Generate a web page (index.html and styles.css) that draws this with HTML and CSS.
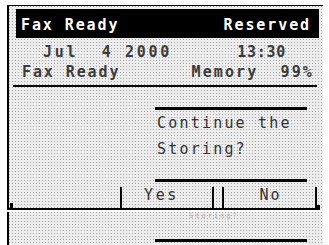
FILE: index.html
```html
<!DOCTYPE html>
<html>
<head>
<meta charset="utf-8">
<link rel="stylesheet" href="styles.css">
</head>
<body>
<div class="panel panel-main">
  <div class="title-bar">
    <span class="t-left">Fax Ready</span>
    <span class="t-right">Reserved</span>
  </div>
  <div class="row row-date">
    <span class="date">Jul  4 2000</span>
    <span class="time">13:30</span>
  </div>
  <div class="row row-status">
    <span class="status">Fax Ready</span>
    <span class="memory">Memory  99%</span>
  </div>
  <div class="rule"></div>
  <div class="dialog">
    <div class="thick"></div>
    <div class="message">Continue the<br>Storing?</div>
    <div class="thick thick-bottom"></div>
  </div>
  <div class="btn-row">
    <div class="cell-left"><div class="stub"></div></div>
    <div class="vline"></div>
    <div class="btn btn-yes">Yes</div>
    <div class="vline"></div>
    <div class="gap"></div>
    <div class="vline"></div>
    <div class="btn btn-no">No</div>
    <div class="vline"></div>
    <div class="stub stub-right"></div>
  </div>
</div>
<div class="panel panel-next">
  <div class="ghost">Storing?</div>
  <div class="thick thick-next"></div>
</div>
</body>
</html>
```
FILE: styles.css
```css
html, body {
  margin: 0;
  padding: 0;
  background: #fff;
}
body {
  width: 329px;
  height: 245px;
  overflow: hidden;
  font-family: "DejaVu Sans Mono", "Liberation Mono", monospace;
  font-size: 15px;
  color: #2a2a2a;
}
.panel {
  margin-left: 7px;
  width: 314px;
  border-left: 2px solid #000;
  background-color: #ededed;
  background-image: conic-gradient(from 270deg at 1px 1px, #a4a4a4 25%, transparent 0);
  background-size: 3px 3px;
  overflow: hidden;
}
.panel-main {
  margin-top: 5px;
  border-top: 1px solid #000;
  padding-top: 3px;
}
.title-bar {
  margin-left: 7px;
  width: 303px;
  height: 29px;
  background: #000;
  color: #fff;
  font-weight: bold;
  display: flex;
  justify-content: space-between;
  align-items: center;
  padding: 3px 8px 0 5px;
  box-sizing: border-box;
  letter-spacing: 1.9px;
  white-space: pre;
}
.row {
  display: flex;
  justify-content: space-between;
  height: 20px;
  line-height: 20px;
  white-space: pre;
  font-weight: bold;
  color: #3c3c3c;
}
.row-date {
  margin-top: 4px;
  padding: 0 37px 0 34px;
}
.date { letter-spacing: 2.7px; }
.time { letter-spacing: 0.7px; }
.row-status {
  padding: 0 9px 0 13px;
}
.status { letter-spacing: 1.9px; }
.memory { letter-spacing: 2.1px; }
.rule {
  margin: 3px 0 0 4px;
  width: 304px;
  height: 2px;
  background: #000;
}
.dialog {
  margin-left: 146px;
  width: 152px;
}
.thick {
  height: 3px;
  background: #000;
}
.dialog .thick:first-child {
  margin-top: 20px;
}
.message {
  padding-left: 2px;
  line-height: 26px;
  letter-spacing: 2.2px;
  white-space: pre;
  color: #333;
}
.thick-bottom {
  margin-top: 17px;
}
.btn-row {
  display: flex;
  align-items: flex-end;
  height: 26px;
  margin-right: 3px;
  border-bottom: 2px solid #000;
}
.cell-left {
  width: 112px;
  height: 100%;
  display: flex;
  align-items: flex-end;
}
.stub {
  margin-left: 1px;
  width: 3px;
  height: 5px;
  background: #000;
}
.stub-right {
  margin-left: 0;
  height: 3px;
}
.vline {
  width: 2px;
  height: 21px;
  background: #000;
}
.btn {
  height: 100%;
  line-height: 26px;
  color: #333;
}
.btn-yes {
  width: 90px;
  padding-left: 22px;
  box-sizing: border-box;
  letter-spacing: 2.5px;
}
.gap { width: 9px; }
.btn-no {
  width: 91px;
  padding-left: 35px;
  box-sizing: border-box;
  letter-spacing: 2px;
}
.panel-next {
  margin-top: 2px;
  height: 40px;
}
.ghost {
  margin: 0 0 0 180px;
  height: 8px;
  font-size: 7px;
  line-height: 8px;
  color: #b4b4b4;
  letter-spacing: 2px;
  white-space: pre;
}
.thick-next {
  margin: 19px 0 0 146px;
  width: 152px;
}
```
